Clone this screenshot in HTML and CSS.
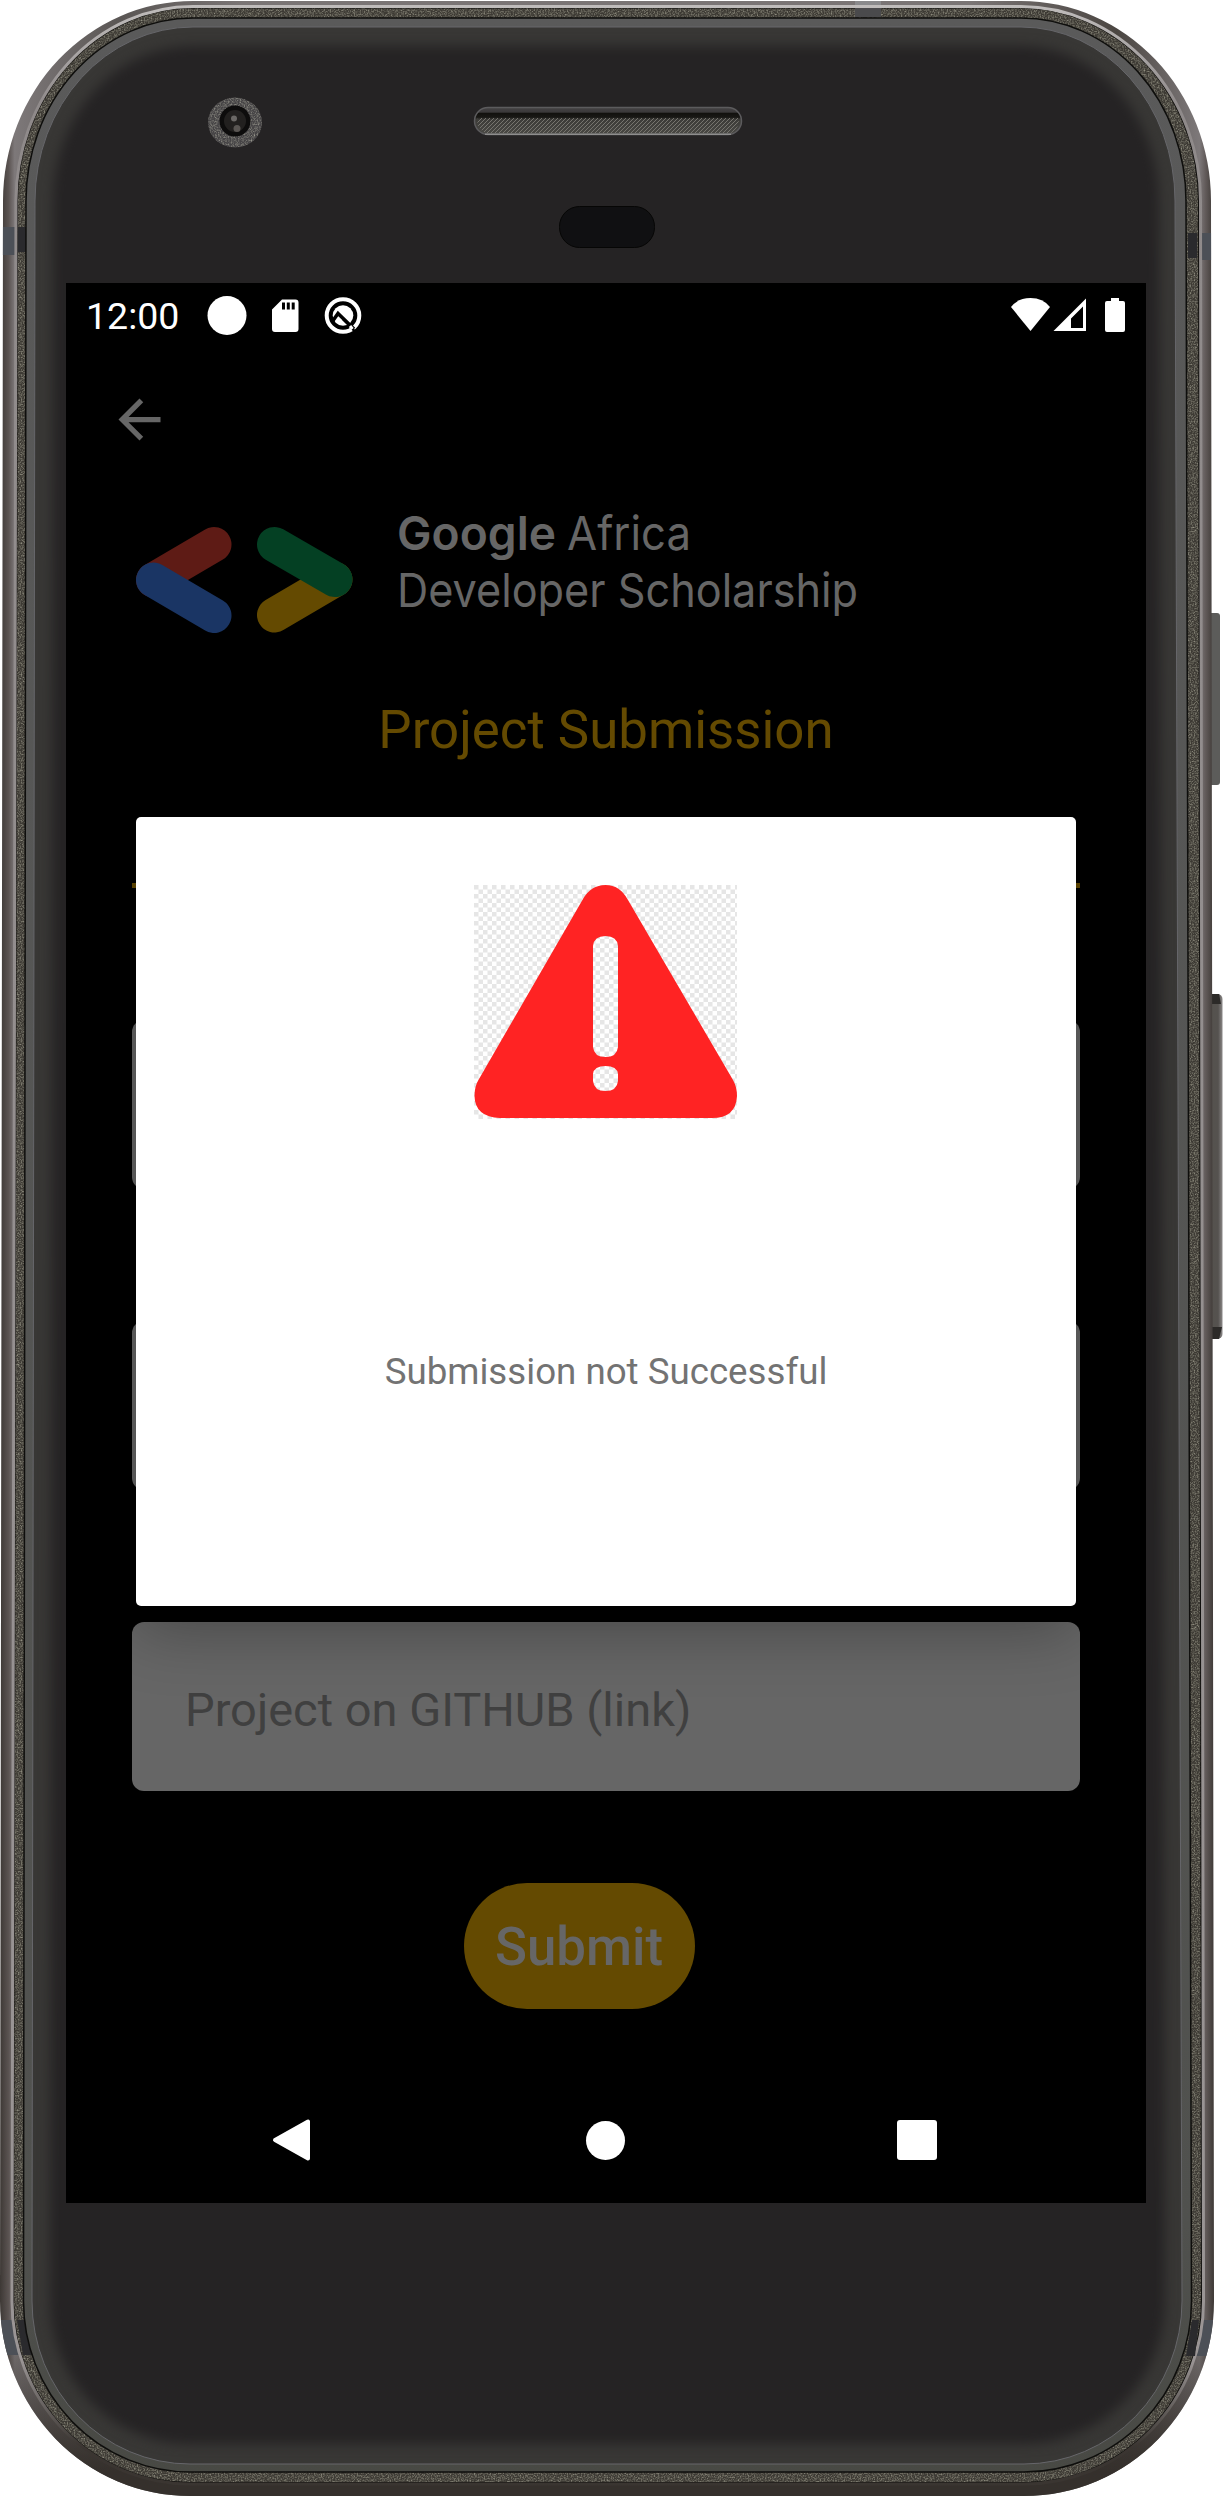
FILE: index.html
```html
<!DOCTYPE html>
<html lang="en">
<head>
<meta charset="utf-8">
<title>Project Submission</title>
<link rel="stylesheet" href="styles.css">
</head>
<body>
<div class="device">
  <svg class="frame" viewBox="0 0 1224 2498" aria-hidden="true">
    <defs>
      <linearGradient id="rim" x1="0" x2="1" y1="0" y2="0">
        <stop offset="0" stop-color="#3d3835"/><stop offset=".007" stop-color="#5a5351"/><stop offset=".012" stop-color="#7d7879"/>
        <stop offset=".1" stop-color="#5a5654"/><stop offset=".2" stop-color="#7a7575"/><stop offset=".8" stop-color="#7a7575"/><stop offset=".92" stop-color="#4b4642"/>
        <stop offset=".988" stop-color="#7d7879"/><stop offset=".993" stop-color="#625b5a"/><stop offset="1" stop-color="#3d3835"/>
      </linearGradient>
      <linearGradient id="rimShade" x1="0" x2="0" y1="0" y2="1">
        <stop offset=".93" stop-color="#35302c" stop-opacity="0"/><stop offset=".99" stop-color="#35302c"/>
      </linearGradient>
      <linearGradient id="shine" x1="0" x2="0" y1="0" y2="1">
        <stop offset="0" stop-color="#bfbcbb"/><stop offset=".04" stop-color="#8f8a8a"/><stop offset=".95" stop-color="#9a9595"/><stop offset=".985" stop-color="#3a3531"/>
      </linearGradient>
      <linearGradient id="bevel" x1="0" x2="0" y1="0" y2="1">
        <stop offset="0" stop-color="#5a5a5a"/><stop offset=".9" stop-color="#50514e"/><stop offset="1" stop-color="#484944"/>
      </linearGradient>
      <linearGradient id="slot" x1="0" x2="0" y1="0" y2="1">
        <stop offset="0" stop-color="#444244"/><stop offset=".17" stop-color="#3b393a"/><stop offset=".22" stop-color="#12110e"/><stop offset=".36" stop-color="#191815"/><stop offset=".44" stop-color="#3c3b38"/><stop offset="1" stop-color="#4a4945"/>
      </linearGradient>
      <linearGradient id="key" x1="0" x2="1" y1="0" y2="0">
        <stop offset="0" stop-color="#3f3d39"/><stop offset=".3" stop-color="#55524e"/><stop offset=".7" stop-color="#55524f"/><stop offset="1" stop-color="#8a8787"/>
      </linearGradient>
      <pattern id="mesh" width="4" height="4" patternUnits="userSpaceOnUse"><path d="M-1 5 5-1M-1 1 1-1M3 5 5 3" stroke="#77756f" stroke-width="1"/></pattern>
      <pattern id="check" x="474" y="885" width="9" height="9" patternUnits="userSpaceOnUse"><path fill="#e6e6e6" d="M0 0h4.5v4.5H0zM4.5 4.5H9V9H4.5z"/></pattern>
      <filter id="grain" x="0" y="0" width="1" height="1" color-interpolation-filters="sRGB">
        <feTurbulence type="fractalNoise" baseFrequency=".7" numOctaves="2" seed="4"/>
        <feColorMatrix values="0 0 0 0 1  0 0 0 0 1  0 0 0 0 .9  .9 0 0 0 -.36"/>
        <feComposite in2="SourceGraphic" operator="in" result="n"/>
        <feMerge><feMergeNode in="SourceGraphic"/><feMergeNode in="n"/></feMerge>
      </filter>
      <filter id="soft" x="-5%" y="-5%" width="110%" height="110%" color-interpolation-filters="sRGB"><feGaussianBlur stdDeviation="6"/></filter>
      <clipPath id="body"><path d="M3 201A190 200 0 0 1 193 1H1021A190 200 0 0 1 1211 201L1214 2301A190 195 0 0 1 1024 2496H190A190 195 0 0 1 0 2301Z"/></clipPath>
      <clipPath id="glass"><path d="M35 201A158 174 0 0 1 193 27H1021A154 174 0 0 1 1175 201L1182 2301A158 163 0 0 1 1024 2464H190A158 163 0 0 1 32 2301Z"/></clipPath>
    </defs>
    <rect x="1208" y="613" width="12" height="172" rx="3" fill="#5c5c5a"/>
    <rect x="1208" y="994" width="14.5" height="345" rx="5" fill="url(#key)"/>
    <path d="M1212 994h7l2 10h-9zM1212 1327h10l-3 12h-7z" fill="#2c2a28"/>
    <path fill="url(#rim)" d="M3 201A190 200 0 0 1 193 1H1021A190 200 0 0 1 1211 201L1214 2301A190 195 0 0 1 1024 2496H190A190 195 0 0 1 0 2301Z"/>
    <path fill="url(#rimShade)" d="M3 201A190 200 0 0 1 193 1H1021A190 200 0 0 1 1211 201L1214 2301A190 195 0 0 1 1024 2496H190A190 195 0 0 1 0 2301Z"/>
    <g clip-path="url(#body)" fill="#4c5057">
      <rect x="0" y="227" width="26" height="28"/><rect x="1187" y="233" width="28" height="27"/>
      <rect x="0" y="2320" width="32" height="35"/><rect x="1185" y="2320" width="30" height="36"/>
      <rect x="855" y="0" width="26" height="9" fill="#8a8a8c"/>
    </g>
    <path fill="#11100e" stroke="url(#shine)" stroke-width="3" d="M16 201A177 195 0 0 1 193 6.500H1021A180 195 0 0 1 1200.500 201L1203.500 2301A180 183 0 0 1 1024 2484H190A178 183 0 0 1 12 2301Z"/>
    <path fill="#3d3a34" filter="url(#grain)" d="M18 201A175 193 0 0 1 193 8.500H1021A177 193 0 0 1 1198 201L1201 2301A177 181 0 0 1 1024 2482H190A176 181 0 0 1 14 2301Z"/>
    <g fill="#2a2a2d"><rect x="18" y="227" width="8" height="25"/><rect x="1188" y="233" width="9" height="25"/><path d="M17 2320h9l6 35h-9zM1192 2320h7l-4 36h-9z"/><rect x="855" y="8" width="26" height="9" fill="#4a4a4c"/></g>
    <path fill="url(#bevel)" stroke="#0e0e0c" stroke-width="1.500" d="M26 201A167 183 0 0 1 193 18H1021A165 183 0 0 1 1186 201L1191.500 2301A167.500 171 0 0 1 1024 2472H190A167 171 0 0 1 23.500 2301Z"/>
    <path fill="#383735" stroke="#66666a" stroke-width="1" d="M35 201A158 174 0 0 1 193 27H1021A154 174 0 0 1 1175 201L1182 2301A158 163 0 0 1 1024 2464H190A158 163 0 0 1 32 2301Z"/>
    <g clip-path="url(#glass)"><path fill="#252324" filter="url(#soft)" d="M53 201A140 155 0 0 1 193 46H1021A138 155 0 0 1 1159 201L1165 2301A141 143 0 0 1 1024 2444H190A140 143 0 0 1 50 2301Z"/></g>
    <ellipse cx="235" cy="122.500" rx="27" ry="25" fill="#454345" filter="url(#grain)"/>
    <circle cx="235" cy="121" r="15.500" fill="#0d0c0c"/><circle cx="235" cy="121" r="11" fill="#22201f"/>
    <circle cx="234" cy="118.500" r="3" fill="#6b6866"/><circle cx="237" cy="128.500" r="3.500" fill="#5a5653"/>
    <rect x="474.500" y="107.500" width="267" height="27" rx="13.500" fill="url(#slot)" stroke="#5c5b5d" stroke-width="1.500"/>
    <path d="M478 118H738Q741 126 731 133H485Q475 126 478 118Z" fill="url(#mesh)"/>
    <path d="M485 134.300H731" stroke="#8e8d8d" stroke-width="1.500"/>
    <rect x="559.500" y="206.500" width="95" height="41" rx="20" fill="#101012" stroke="#060605"/>
  </svg>

  <main class="screen">
    <header class="status">
      <span class="clock">12:00</span>
      <svg class="notices" width="100" height="40" viewBox="207 294 100 40" fill="#fff">
        <circle cx="227" cy="314.500" r="19.500"/>
        <path fill-rule="evenodd" d="M282 298.500h13.500q3 0 3 3v26.500q0 3-3 3H275q-3 0-3-3V308.500zM282 301.500v7h3v-7zM286.800 301.500v7h3v-7zM291.700 301.500v7h3v-7z"/>
      </svg>
      <svg class="assist" width="40" height="40" viewBox="323 294 40 40">
        <circle cx="343" cy="314.500" r="16.300" fill="none" stroke="#fff" stroke-width="4"/>
        <circle cx="343" cy="314.500" r="10.300" fill="#fff"/>
        <path d="M332 321 338 312.500 354 328" fill="none" stroke="#000" stroke-width="3.500"/>
        <path d="M343 318 350 325 357 333" fill="none" stroke="#000" stroke-width="2.500"/>
        <path d="M350 325 352.500 328" stroke="#fff" stroke-width="3"/>
      </svg>
      <svg class="radios" width="116" height="36" viewBox="1010 296 116 36" fill="#fff">
        <path d="M1011 306Q1018 297 1030.500 297T1050 306L1030.500 330Z"/>
        <path fill-rule="evenodd" d="M1086 297.500V330H1053.500ZM1083 305.500 1071 317.500V327H1083Z"/>
        <path d="M1111 297h8v3h4q2 0 2 2v27q0 2-2 2h-16q-2 0-2-2v-27q0-2 2-2h4z"/>
      </svg>
    </header>

    <nav class="toolbar">
      <svg width="63" height="63" viewBox="0 0 24 24" fill="#666"><path d="M20 11H7.830l5.590-5.590L12 4l-8 8 8 8 1.410-1.410L7.830 13H20z"/></svg>
    </nav>

    <svg class="brand" width="740" height="140" viewBox="132 500 740 140">
      <g stroke-width="35" stroke-linecap="round">
        <path d="M214 544.500 153.500 580" stroke="#5e1b15"/><path d="M153.500 580 214 615.500" stroke="#1a3564"/>
        <path d="M274.500 615 335 579.500" stroke="#644a01"/><path d="M274.500 544.500 335 579.500" stroke="#044023"/>
      </g>
      <g class="brand-text">
        <text x="397" y="549.500" textLength="159" lengthAdjust="spacingAndGlyphs" class="strong">Google</text>
        <text x="567" y="549.500" textLength="124" lengthAdjust="spacingAndGlyphs">Africa</text>
        <text x="397" y="606.500" textLength="461" lengthAdjust="spacingAndGlyphs">Developer Scholarship</text>
      </g>
    </svg>

    <h1 class="title">Project Submission</h1>
    <div class="rule"></div>
    <form class="form">
      <div class="field"></div>
      <div class="field"></div>
      <div class="field">Project on GITHUB (link)</div>
    </form>
    <button class="submit" type="button">Submit</button>

    <footer class="navbar">
      <svg width="40" height="44" viewBox="271 2118 40 44"><path d="M308 2121.500V2158.500L275 2140Z" fill="#fff" stroke="#fff" stroke-width="4" stroke-linejoin="round"/></svg>
      <span class="home"></span>
      <span class="recents"></span>
    </footer>

    <section class="dialog" role="alertdialog">
      <svg class="warning" width="263" height="234" viewBox="474 885 263 234">
        <path fill="url(#check)" d="M474 885h263v234H474z"/>
        <path fill="#ff2323" fill-rule="evenodd" d="M583 899Q591 885 605.500 885T628 900L733 1080Q737 1087 737 1096Q736 1118 712 1118H500Q475 1117 474.500 1096Q474.500 1086 479 1079ZM593 946V1047Q594 1057 605.500 1057T618 1047V946Q617 936 605.500 936T593 946ZM593 1074V1081Q594 1091 605.500 1091T618 1081V1074Q617 1066 605.500 1066T593 1074Z"/>
      </svg>
      <p class="message">Submission not Successful</p>
    </section>
  </main>
</div>
</body>
</html>
```
FILE: styles.css
```css
* { box-sizing: border-box; }
body { margin: 0; background: #fff; font-family: Roboto, "Liberation Sans", sans-serif; }
.device { position: relative; width: 1224px; height: 2498px; padding: 283px 78px 295px 66px; }
.frame { position: absolute; inset: 0; width: 1224px; height: 2498px; }
.screen { position: relative; display: flex; flex-direction: column; width: 1080px; height: 1920px; background: #000; }
.screen svg { display: block; flex: none; }

.status { display: flex; align-items: center; height: 63px; padding: 0 20px 0 20px; }
.clock { width: 121px; color: #fff; font-size: 37.5px; line-height: 44px; padding-top: 2px; white-space: nowrap; }
.notices { margin-right: 16px; }
.radios { margin-left: auto; }

.toolbar { height: 154px; padding: 42px; }
.brand { margin-left: 66px; }
.brand-text { fill: #666; font-family: Inter, "Open Sans", sans-serif; font-size: 47px; }
.strong { font-weight: 600; }

.title { margin: 59px 0 0; color: #644a01; font-size: 52.8px; line-height: 62px; font-weight: 400; text-align: center; }
.rule { height: 5px; margin: 122px 66px 0; background: #644a01; }
.form { display: flex; flex-direction: column; gap: 132px; margin: 132px 66px 0; }
.field { display: flex; align-items: center; height: 169px; padding: 5px 53px 0; border-radius: 12px; background: #666; color: #404040; font-size: 47px; }
.submit { width: 231px; height: 126px; margin: 92px 0 0 398px; padding: 2px 1px 0 0; border: 0; border-radius: 63px; background: #644a01; color: #666; font: 500 52.8px Roboto, sans-serif; }

.navbar { display: flex; align-items: center; justify-content: space-between; height: 126px; margin-top: auto; padding: 0 209px 0 205px; }
.home { width: 39px; height: 39px; margin-left: 2px; border-radius: 50%; background: #fff; }
.recents { width: 40px; height: 40px; border-radius: 3px; background: #fff; }

.dialog { position: absolute; left: 70px; top: 534px; display: flex; flex-direction: column; align-items: center; width: 940px; height: 789px; padding-top: 68px; border-radius: 5px; background: #fff; box-shadow: 0 24px 64px rgba(0, 0, 0, .3); }
.warning { margin-right: 1px; }
.message { margin: 231px 0 0; color: #737373; font-size: 36.7px; line-height: 43px; }
```
